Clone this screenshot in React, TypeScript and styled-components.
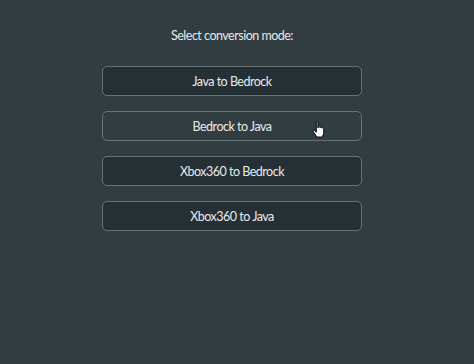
import React from "react";
import styled, { createGlobalStyle } from "styled-components";

const fontStack = `Lato, "Open Sans", sans-serif`;

const Global = createGlobalStyle`
  html, body {
    margin: 0;
    padding: 0;
    background: #323d42;
  }
  body {
    font-family: ${fontStack};
  }
`;

const Page = styled.div`
  width: 474px;
  height: 364px;
  display: flex;
  flex-direction: column;
  align-items: center;
  padding: 28px 10px 0 0;
  box-sizing: border-box;
  background: #323d42;
`;

const Title = styled.div`
  color: #e6e9ea;
  font-family: ${fontStack};
  font-size: 12.5px;
  letter-spacing: -0.5px;
  line-height: 15px;
  margin-bottom: 23px;
`;

const List = styled.div`
  display: flex;
  flex-direction: column;
  gap: 15px;
`;

const ModeButton = styled.button<{ $hover?: boolean }>`
  position: relative;
  width: 260px;
  height: 30px;
  border: 1px solid #6a7478;
  border-radius: 5px;
  background: ${({ $hover }) => ($hover ? "#323d42" : "#253035")};
  color: #e8ebec;
  font-family: ${fontStack};
  font-size: 12.5px;
  letter-spacing: -0.5px;
  padding: 0;
  cursor: pointer;
`;

const Cursor = styled.svg`
  position: absolute;
  left: 209px;
  top: 8px;
`;

const HandCursor = () => (
  <Cursor width="14" height="19" viewBox="0 0 13 17">
    <path
      d="M4 1.5c0-.8 1.5-.8 1.5 0V7l.5-1.2c.4-.6 1.4-.5 1.5.2v1l.4-.8c.4-.5 1.3-.4 1.4.3v.8l.3-.4c.4-.4 1.3-.2 1.3.5V11c0 2-1 3.5-1.5 4.5H4.5L1.2 10.5c-.5-.8.4-1.6 1.1-1L4 11V1.5z"
      fill="#fff"
      stroke="#000"
      strokeWidth="0.9"
      strokeLinejoin="round"
    />
  </Cursor>
);

const modes = ["Java to Bedrock", "Bedrock to Java", "Xbox360 to Bedrock", "Xbox360 to Java"];

export default function App() {
  return (
    <Page>
      <Global />
      <Title>Select conversion mode:</Title>
      <List>
        {modes.map((m, i) => (
          <ModeButton key={m} $hover={i === 1}>
            {m}
            {i === 1 && <HandCursor />}
          </ModeButton>
        ))}
      </List>
    </Page>
  );
}
